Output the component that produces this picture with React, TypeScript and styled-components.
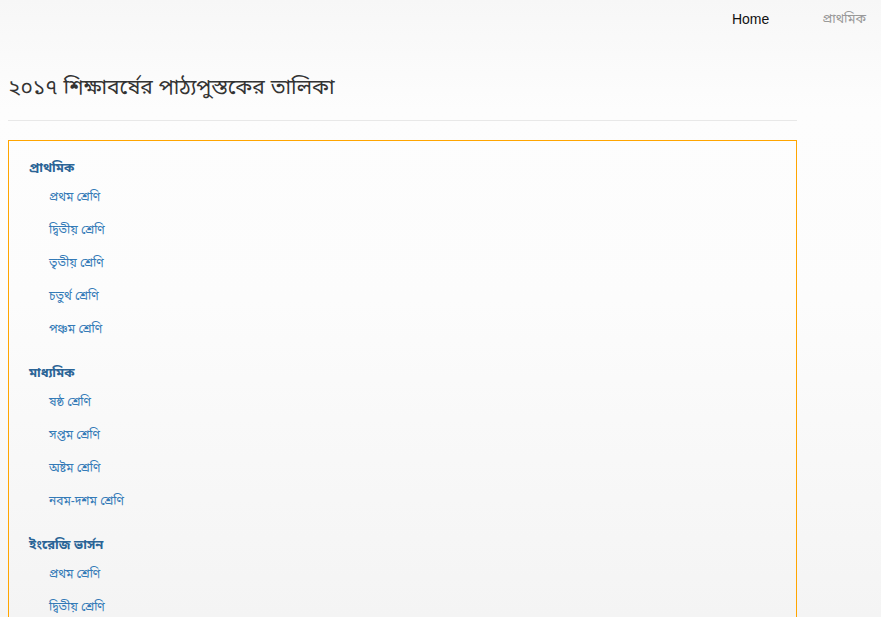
import { createGlobalStyle, styled } from 'styled-components';

const GlobalStyle = createGlobalStyle`
  html, body {
    margin: 0;
    padding: 0;
  }
  body {
    min-height: 617px;
    font-family: "Liberation Sans", "Noto Sans Bengali", "Noto Sans", sans-serif;
    font-size: 14px;
    color: #333;
    background: linear-gradient(to bottom, #f7f7f7 0px, #fdfdfd 110px, #fcfcfc 300px, #f4f4f4 617px);
  }
`;

const sections = [
  {
    title: 'প্রাথমিক',
    items: ['প্রথম শ্রেণি', 'দ্বিতীয় শ্রেণি', 'তৃতীয় শ্রেণি', 'চতুর্থ শ্রেণি', 'পঞ্চম শ্রেণি'],
  },
  {
    title: 'মাধ্যমিক',
    items: ['ষষ্ঠ শ্রেণি', 'সপ্তম শ্রেণি', 'অষ্টম শ্রেণি', 'নবম-দশম শ্রেণি'],
  },
  {
    title: 'ইংরেজি ভার্সন',
    items: ['প্রথম শ্রেণি', 'দ্বিতীয় শ্রেণি', 'তৃতীয় শ্রেণি'],
  },
];

const App = () => {
  return (
    <>
      <GlobalStyle />
      <NavBarS>
        <NavLinkS>Home</NavLinkS>
        <NavLinkS $muted>প্রাথমিক</NavLinkS>
      </NavBarS>
      <PageS>
        <TitleS>২০১৭ শিক্ষাবর্ষের পাঠ্যপুস্তকের তালিকা</TitleS>
        <DividerS />
        <ListBoxS>
          {sections.map((section) => (
            <SectionS key={section.title}>
              <SectionTitleS>{section.title}</SectionTitleS>
              <ItemListS>
                {section.items.map((item) => (
                  <li key={item}>
                    <ItemLinkS href='#'>{item}</ItemLinkS>
                  </li>
                ))}
              </ItemListS>
            </SectionS>
          ))}
        </ListBoxS>
      </PageS>
    </>
  );
};

export default App;

const NavBarS = styled.nav`
  display: flex;
  justify-content: flex-end;
  align-items: center;
  gap: 53px;
  height: 38px;
  padding-right: 15px;
`;

const NavLinkS = styled.a<{ $muted?: boolean }>`
  font-size: ${({ $muted }) => ($muted ? '13px' : '14px')};
  color: ${({ $muted }) => ($muted ? '#999' : '#111')};
  text-decoration: none;
`;

const PageS = styled.main`
  width: 789px;
  padding-left: 8px;
`;

const TitleS = styled.h1`
  margin: 33px 0 0;
  font-size: 21px;
  font-weight: 400;
  line-height: 32px;
  color: #333;
`;

const DividerS = styled.hr`
  margin: 17px 0 19px;
  border: 0;
  border-top: 1px solid #e8e8e8;
`;

const ListBoxS = styled.div`
  border: 1px solid #ffa500;
  border-bottom: 0;
  padding: 14px 20px 0;
  min-height: 480px;
`;

const SectionS = styled.section`
  margin-bottom: 14px;
`;

const SectionTitleS = styled.h4`
  margin: 0;
  font-size: 13px;
  font-weight: 700;
  line-height: 26px;
  color: #2a6496;
`;

const ItemListS = styled.ul`
  list-style: none;
  margin: 0;
  padding: 0 0 0 20px;

  li {
    line-height: 33px;
    font-size: 12px;
  }
`;

const ItemLinkS = styled.a`
  color: #337ab7;
  text-decoration: none;
`;
